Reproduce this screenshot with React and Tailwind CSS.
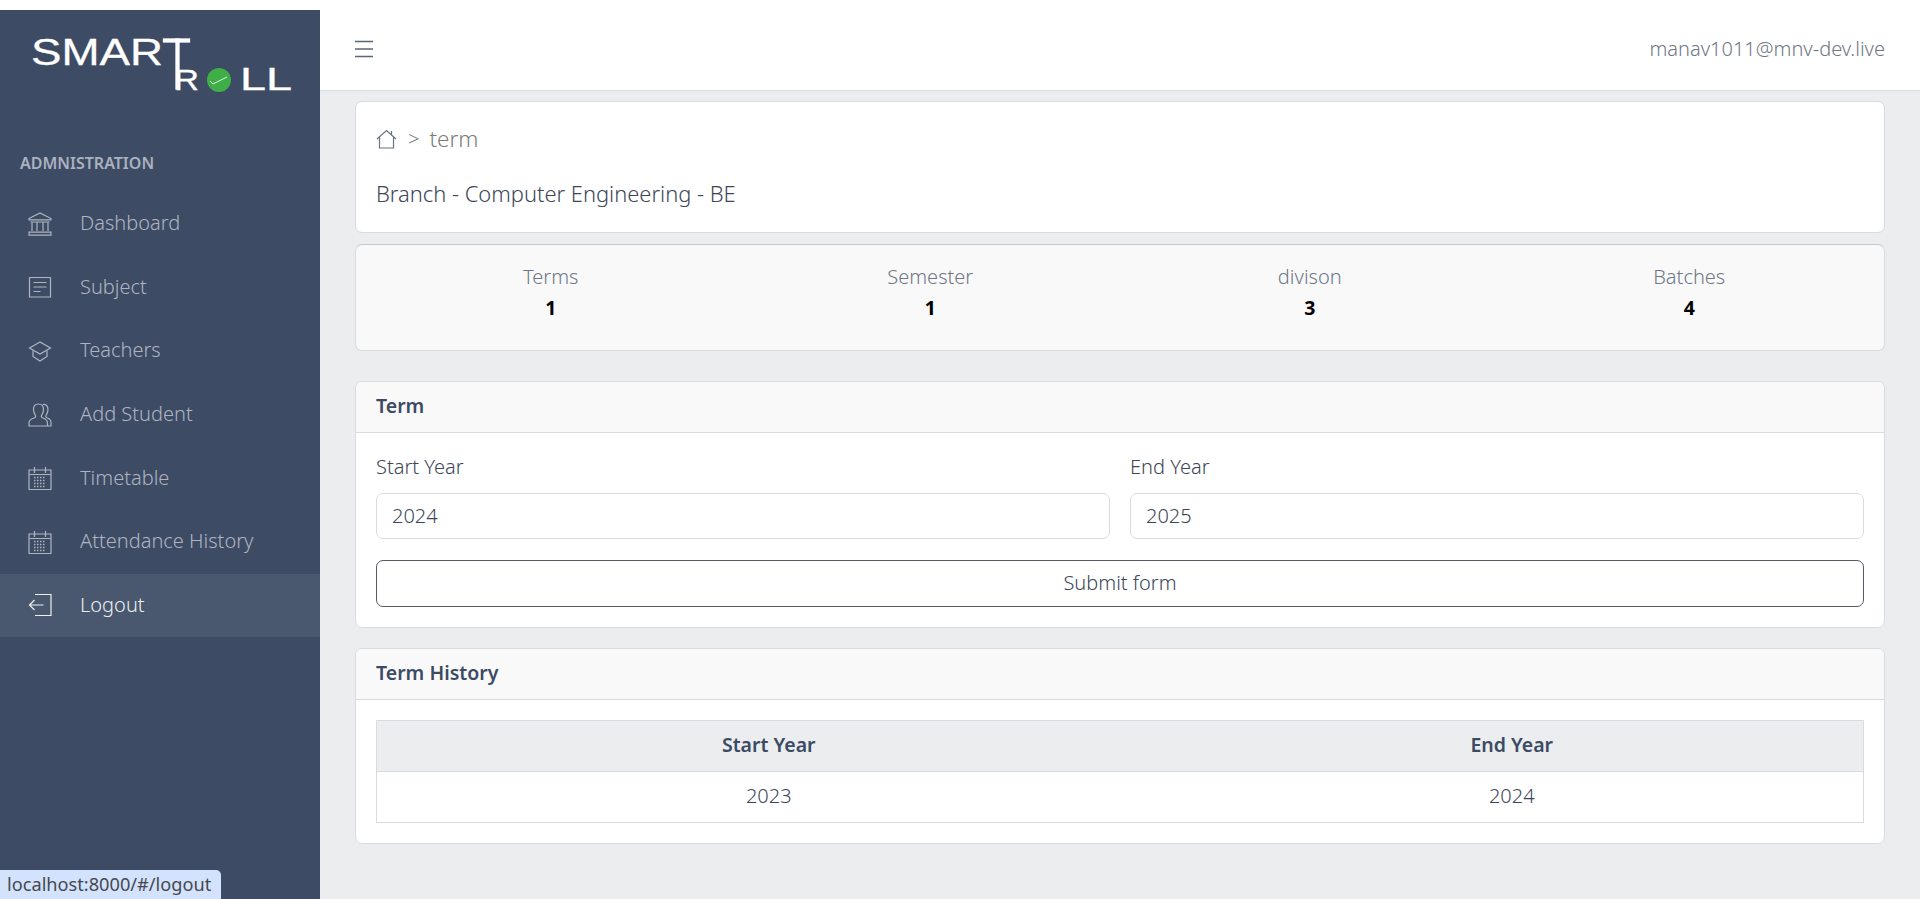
const font = { fontFamily: '"Noto Sans", sans-serif' };

function Icon({ children, className = 'w-6 h-6' }) {
  return (
    <svg viewBox="0 0 24 24" fill="none" stroke="currentColor" strokeWidth="1.2" className={className}>
      {children}
    </svg>
  );
}

const BankIcon = () => (
  <Icon>
    <path d="M1 6.500 12 1l11 5.500v1.300H1z" />
    <path d="M4 10v9M9 10v9M15 10v9M20 10v9" />
    <path d="M2.500 10h19M1 20.200h22v3H1z" />
  </Icon>
);
const NotesIcon = () => (
  <Icon>
    <path d="M1.500 2.500h21v19.500h-21z" />
    <path d="M5.500 7.500h13M5.500 12h13M5.500 16.500h7" />
  </Icon>
);
const EducationIcon = () => (
  <Icon>
    <path d="M12 3 1.500 9 12 15l10.500-6z" />
    <path d="M5 11.500v6L12 22l7-4.500v-6" />
  </Icon>
);
const PeopleIcon = () => (
  <Icon>
    <path d="M1 23v-3c0-3 2-4 5-5 1.500-.5 2-1.500 1.500-2.500C6 10.500 5.500 8.500 5.500 6.500 5.500 3 7.500 1 10.500 1s5 2 5 5.500c0 2-.5 4-2 6-.5 1 0 2 1.500 2.500 3 1 4.500 2 4.500 5v3z" />
    <path d="M15 1.500c3-.5 5 1.500 5 5 0 2-.5 4-2 6-.5 1 0 2 1.500 2.500 2 .7 3.500 2 3.500 4.500V23h-3" />
  </Icon>
);
const CalendarIcon = () => (
  <Icon>
    <path d="M1 4h22v19.500H1z" />
    <path d="M6.500 1v6M17.500 1v6M1 8.500h22" />
    <path d="M6 11.500h12M6 14.500h12M6 17.500h12M6 20.500h12" strokeDasharray="1.500 1.500" strokeWidth="1.500" />
  </Icon>
);
const LogoutIcon = () => (
  <Icon>
    <path d="M7 1.500h16v21H7" />
    <path d="M1.500 12h14M6.500 7l-5 5 5 5" />
  </Icon>
);

const navItems = [
  { label: 'Dashboard', icon: BankIcon },
  { label: 'Subject', icon: NotesIcon },
  { label: 'Teachers', icon: EducationIcon },
  { label: 'Add Student', icon: PeopleIcon },
  { label: 'Timetable', icon: CalendarIcon },
  { label: 'Attendance History', icon: CalendarIcon },
  { label: 'Logout', icon: LogoutIcon, active: true },
];

const stats = [
  { label: 'Terms', value: 1 },
  { label: 'Semester', value: 1 },
  { label: 'divison', value: 3 },
  { label: 'Batches', value: 4 },
];

function Logo() {
  return (
    <svg width="320" height="100" viewBox="0 0 320 100" className="block">
      <g fill="#ffffff" stroke="#ffffff" strokeWidth="0.300" fontFamily="Liberation Sans, sans-serif">
        <text x="31" y="55" fontSize="37" textLength="132" lengthAdjust="spacingAndGlyphs">SMAR</text>
        <rect x="163" y="28.500" width="27" height="4" />
        <rect x="175.500" y="28.500" width="4" height="51" />
        <text x="174" y="80" fontSize="30" textLength="25" lengthAdjust="spacingAndGlyphs">R</text>
        <text x="240" y="80" fontSize="31" textLength="52" lengthAdjust="spacingAndGlyphs">LL</text>
      </g>
      <circle cx="219" cy="70" r="12" fill="#3fae49" />
      <path d="M210 71l3 3 14-7" stroke="#d8f0da" strokeWidth="1" fill="none" />
    </svg>
  );
}

function Card({ title, children }) {
  return (
    <div className="bg-white border border-[#d8dbe0] rounded-[7px] overflow-hidden">
      <div className="h-[51px] px-[20px] pb-[2px] flex items-center bg-[#f9f9fa] border-b border-[#d8dbe0] font-semibold text-[19.500px] text-[#3c4b64]">
        {title}
      </div>
      <div className="p-[20px]">{children}</div>
    </div>
  );
}

function Field({ label, value }) {
  return (
    <div className="flex-1">
      <div className="text-[20px] leading-[28px] mb-[12px] font-light text-[#3c4656]">{label}</div>
      <input
        readOnly
        value={value}
        className="w-full h-[46px] px-[15px] pb-[2px] bg-white border border-[#d8dbe0] rounded-[7px] text-[20px] font-light text-[#3c4656] outline-none"
        style={font}
      />
    </div>
  );
}

export default function App() {
  return (
    <div className="flex h-screen overflow-hidden bg-white" style={font}>
      <div className="w-[320px] shrink-0 pt-[10px] bg-white">
        <div className="h-full bg-[#3e4b64]">
          <Logo />
          <div className="pl-[20px] pt-[41px] pb-[17px] text-[16px] leading-[24px] font-semibold text-[#aab2c0] uppercase">
            Admnistration
          </div>
          <nav>
            {navItems.map((item) => (
              <div
                key={item.label}
                className={`h-[63.600px] flex items-center pl-[28px] gap-[28px] text-[20px] font-light ${item.active ? 'bg-[#4a586f] text-[#eceef1]' : 'text-[#aeb5c1]'}`}
              >
                <item.icon />
                <span className="pb-[1px]">{item.label}</span>
              </div>
            ))}
          </nav>
        </div>
      </div>

      <div className="flex-1 min-w-0 flex flex-col bg-[#ebedef]">
        <header className="h-[91px] shrink-0 bg-white border-b border-[#d8dbe0] flex items-center justify-between pl-[34px] pr-[35px] pt-[8px]">
          <svg width="20" height="20" viewBox="0 0 20 20" stroke="#5b6678" strokeWidth="1.300">
            <path d="M1 2.500h18M1 10h18M1 17.500h18" />
          </svg>
          <span className="text-[20px] font-light text-[#6f7785]">manav1011@mnv-dev.live</span>
        </header>

        <main className="px-[35px] pt-[10px] flex flex-col">
          <div className="h-[132px] bg-white border border-[#d8dbe0] rounded-[7px] px-[20px] pt-[22px]">
            <div className="h-[30px] flex items-center text-[22.500px] font-light text-[#7d7d7d]">
              <svg width="21" height="21" viewBox="0 0 21 21" fill="none" stroke="#6b7484" strokeWidth="1.200" className="mr-[11px]">
                <path d="M1 10 10.500 1.500 20 10M3.500 8v11h14V8M15.500 2v4" />
              </svg>
              <span className="mr-[10px] text-[20px]">&gt;</span>
              <span>term</span>
            </div>
            <div className="mt-[25px] text-[21.900px] leading-[30px] font-light text-[#3c4656]">Branch - Computer Engineering - BE</div>
          </div>

          <div className="mt-[11px] h-[107px] bg-[#f9f9fa] border border-[#d8dbe0] border-t-[#c4c9d0] rounded-[7px] px-[5px] pt-[17px] grid grid-cols-4 text-center">
            {stats.map((s) => (
              <div key={s.label}>
                <div className="text-[20px] leading-[30px] font-light text-[#6f7785]">{s.label}</div>
                <div className="mt-[1px] text-[19.500px] leading-[30px] font-bold text-black">{s.value}</div>
              </div>
            ))}
          </div>

          <div className="mt-[30px]">
            <Card title="Term">
              <div className="flex gap-[20px]">
                <Field label="Start Year" value="2024" />
                <Field label="End Year" value="2025" />
              </div>
              <button className="mt-[21px] w-full h-[47px] pb-[1px] bg-white border border-[#555a63] rounded-[7px] text-[20px] font-light text-[#3c4656]">
                Submit form
              </button>
            </Card>
          </div>

          <div className="mt-[20px]">
            <Card title="Term History">
              <table className="w-full border-collapse text-[20px] font-light text-center text-[#3c4656]">
                <thead>
                  <tr className="bg-[#ebedef] h-[51px]">
                    <th className="w-[784px] pb-[2px] border border-[#d8dbe0] border-r-0 font-semibold text-[19.500px] text-[#3c4b64]">Start Year</th>
                    <th className="pb-[2px] border border-[#d8dbe0] border-l-0 font-semibold text-[19.500px] text-[#3c4b64]">End Year</th>
                  </tr>
                </thead>
                <tbody>
                  <tr className="h-[51px]">
                    <td className="pb-[2px] border border-[#d8dbe0] border-r-0">2023</td>
                    <td className="pb-[2px] border border-[#d8dbe0] border-l-0">2024</td>
                  </tr>
                </tbody>
              </table>
            </Card>
          </div>
        </main>
      </div>

      <div className="fixed left-0 bottom-0 h-[29px] w-[221px] bg-[#d3e3fd] rounded-tr-[5px] pl-[7px] flex items-center text-[18.200px] text-[#45494f]">
        localhost:8000/#/logout
      </div>
    </div>
  );
}
